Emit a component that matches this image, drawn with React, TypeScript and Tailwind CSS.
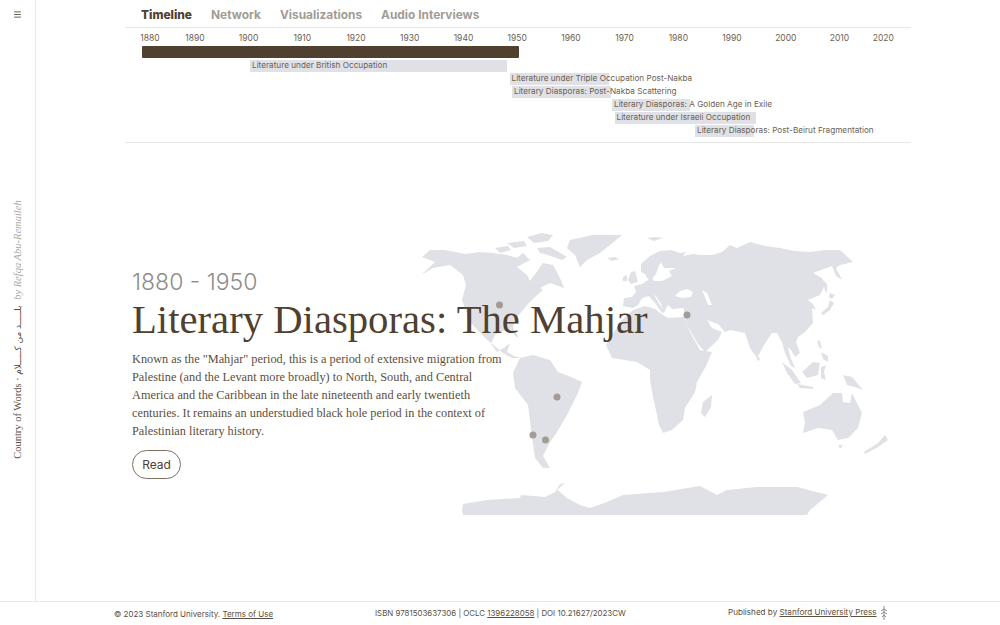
import { Menu } from "lucide-react"

const sans = "font-['Inter','Liberation_Sans',sans-serif]"
const serif = "font-['Liberation_Serif',serif]"

const years = [1890, 1900, 1910, 1920, 1930, 1940, 1950, 1960, 1970, 1980, 1990, 2000, 2010]

// left offset from the timeline edge, bar width, label
const periods = [
  { left: 125, width: 257, label: "Literature under British Occupation" },
  { left: 384.5, width: 99.5, label: "Literature under Triple Occupation Post-Nakba" },
  { left: 387, width: 99, label: "Literary Diasporas: Post-Nakba Scattering" },
  { left: 487, width: 78, label: "Literary Diasporas: A Golden Age in Exile" },
  { left: 489.5, width: 141.5, label: "Literature under Israeli Occupation" },
  { left: 570, width: 59, label: "Literary Diasporas: Post-Beirut Fragmentation" },
]

const land = [
  // north america
  "M422 257 L430 250 L445 250 L465 254 L480 252 L493 253 L507 255 L517 258 L523 253 L530 260 L517 267 L527 275 L530 281 L538 270 L543 263 L553 265 L560 278 L564 288 L550 283 L540 288 L543 290 L535 297 L527 305 L515 320 L513 328 L519 338 L515 336 L511 329 L503 331 L495 335 L491 344 L497 352 L505 347 L510 343 L507 352 L514 356 L521 358 L512 358 L503 353 L485 338 L470 322 L462 300 L466 285 L463 275 L450 265 L433 268 L421 275 L435 262 Z",
  // arctic islands
  "M495 248 L508 246 L511 250 L500 253 Z",
  "M507 243 L524 241 L527 246 L514 248 Z",
  "M527 237 L541 233 L553 235 L548 241 L534 243 Z",
  "M537 248 L550 247 L567 257 L562 260 L548 255 L540 253 Z",
  // greenland
  "M570 240 L593 235 L622 235 L610 245 L600 253 L587 260 L580 267 L575 255 L567 248 Z",
  "M607 258 L615 257 L619 259 L612 261 Z",
  "M647 238 L656 237 L663 238 L654 241 Z",
  // uk + ireland
  "M628 280 L631 272 L635 271 L638 282 L631 284 Z",
  "M623 277 L627 275 L627 281 L623 281 Z",
  // eurasia
  "M633 308 L623 306 L624 298 L632 297 L636 292 L634 286 L642 284 L648 280 L651 276 L654 281 L662 281 L672 276 L669 271 L676 268 L664 268 L661 262 L666 258 L659 265 L656 274 L652 279 L648 279 L645 274 L641 272 L641 264 L650 256 L660 251 L671 250 L680 253 L686 252 L683 256 L693 254 L700 255 L712 255 L722 252 L730 245 L737 248 L750 242 L765 246 L780 248 L795 251 L810 252 L825 250 L840 250 L853 262 L840 265 L836 268 L842 280 L836 276 L832 266 L813 273 L822 278 L825 285 L820 295 L808 300 L813 304 L816 310 L812 308 L813 323 L805 332 L798 337 L796 342 L800 353 L795 357 L791 350 L788 347 L790 356 L795 368 L791 366 L785 353 L782 342 L777 333 L772 333 L764 345 L757 358 L750 348 L745 333 L730 330 L725 332 L718 324 L707 320 L712 328 L722 332 L718 340 L705 352 L698 344 L687 325 L684 316 L684 308 L672 309 L668 305 L664 312 L661 304 L656 296 L654 295 L660 305 L665 312 L662 313 L655 303 L649 296 L642 298 L638 305 Z",
  // africa
  "M633 310 L645 306 L655 309 L660 313 L668 318 L684 317 L690 332 L700 350 L712 352 L706 366 L697 382 L695 392 L685 408 L683 420 L672 430 L663 433 L659 425 L657 415 L653 397 L650 380 L650 370 L637 362 L625 360 L612 358 L606 345 L612 335 L622 320 Z",
  // madagascar
  "M712 395 L711 407 L705 417 L701 413 L703 402 Z",
  // south america
  "M513 373 L520 358 L533 355 L550 360 L558 372 L571 377 L582 382 L578 393 L567 415 L557 432 L549 444 L543 456 L550 468 L543 468 L535 458 L532 437 L528 405 L515 388 Z",
  // sakhalin, japan, sri lanka
  "M823 280 L827 284 L827 293 L825 291 Z",
  "M830 293 L835 295 L832 299 L829 297 Z",
  "M830 300 L834 303 L830 310 L823 315 L821 313 L828 307 Z",
  "M757 356 L760 358 L759 361 L757 360 Z",
  // philippines, borneo, sumatra, java, new guinea
  "M817 340 L820 341 L822 349 L819 347 Z",
  "M821 352 L828 356 L828 362 L823 359 Z",
  "M802 372 L813 362 L820 363 L818 375 L807 378 Z",
  "M782 362 L792 370 L801 383 L795 384 L787 373 Z",
  "M797 384 L813 387 L813 389 L800 388 Z",
  "M821 367 L826 365 L824 372 L826 380 L821 378 Z",
  "M843 375 L852 377 L863 390 L855 387 L847 385 Z",
  // australia, tasmania, new zealand
  "M803 412 L820 405 L833 393 L842 393 L843 402 L850 403 L852 393 L862 413 L858 428 L848 438 L838 440 L832 430 L818 428 L803 433 L805 423 Z",
  "M838 445 L843 445 L840 449 Z",
  "M885 435 L888 440 L878 447 L865 454 L864 452 L878 443 Z",
  // antarctica
  "M463 504 L487 500 L520 498 L521 495 L545 497 L555 492 L560 484 L565 483 L557 490 L560 492 L567 498 L580 505 L590 508 L607 502 L623 495 L663 492 L700 486 L717 495 L727 490 L757 487 L797 487 L828 495 L810 510 L807 515 L463 515 L462 510 Z",
]

// inland water, cut out of the land above
const seas = [
  "M675 296 L680 291 L687 289 L693 292 L691 297 L682 298 Z",
  "M702 290 L707 293 L712 305 L708 305 L705 297 Z",
]

const dots = [
  [499.5, 305],
  [687, 315],
  [557, 397],
  [533, 435],
  [545.5, 440],
]

function WorldMap() {
  return (
    <svg className="absolute left-[379px] top-[230px] h-[290px] w-[495px]" viewBox="415 230 495 290">
      {land.map((d, i) => (
        <path key={i} d={d} fill="#dfe1e6" />
      ))}
      {seas.map((d, i) => (
        <path key={i} d={d} fill="#ffffff" />
      ))}
      {dots.map(([cx, cy], i) => (
        <circle key={i} cx={cx} cy={cy} r="3.5" fill="#a29c95" />
      ))}
    </svg>
  )
}

export default function App() {
  return (
    <div className={`flex h-[625px] w-[1000px] flex-col overflow-hidden bg-white text-[#4f4030] ${sans}`}>
      <div className="flex min-h-0 flex-1">
        <aside className="relative flex w-[36px] shrink-0 flex-col items-center border-r border-[#e8e8e8] pt-[58px]">
          <Menu className="absolute left-[13px] top-[10px] h-[9px] w-[9px] text-[#4f4030]" strokeWidth={2.2} />
          <div className="mt-[142px] flex rotate-180 items-center gap-[6px] whitespace-nowrap [writing-mode:vertical-rl]">
            <span className={`text-[10.5px] text-[#5c4f40] ${serif}`}>
              Country of Words ·{" "}
              <span className="font-['DejaVu_Sans',sans-serif] text-[9px]">بلـــــد من كـــــلام</span>
            </span>
            <span className={`text-[10.5px] italic text-[#a9a9a9] ${serif}`}>by Refqa Abu-Remaileh</span>
          </div>
        </aside>

        <main className="relative flex-1">
          <div className="ml-[89px] w-[786px]">
            <nav className="flex h-[28px] items-center gap-[19px] border-b border-[#e8e8e8] pl-[16px] pt-[2px] text-[11.9px] font-bold text-[#a29c95]">
              <span className="font-extrabold text-[#4f4030]">Timeline</span>
              <span>Network</span>
              <span>Visualizations</span>
              <span>Audio Interviews</span>
            </nav>

            <div className="h-[115px] border-b border-[#e8e8e8]">
              <div className="ml-[7px] flex pt-[4px] text-center text-[8.5px] leading-[13px] text-[#6b5f52]">
                <span className="w-[36px]">1880</span>
                {years.map((y) => (
                  <span key={y} className="w-[53.73px]">{y}</span>
                ))}
                <span className="w-[34px]">2020</span>
              </div>
              <div className="ml-[17px] mt-[1px] h-[12px] w-[377px] rounded-[1px] bg-[#4f4030]" />
              <div className="mt-[2px] flex flex-col gap-[1.5px] text-[8.2px] leading-[11.5px] text-[#6b5f52]">
                {periods.map((p) => (
                  <div key={p.label} className="relative h-[11.5px] bg-[#dfe1e6]" style={{ marginLeft: p.left, width: p.width }}>
                    <span className="absolute left-[2px] top-0 whitespace-nowrap">{p.label}</span>
                  </div>
                ))}
              </div>
            </div>
          </div>

          <WorldMap />

          <section className="relative ml-[96px] mt-[125px] w-[375px]">
            <div className="text-[23px] font-light leading-[28px] text-[#8f8d8a]">1880 - 1950</div>
            <h1 className={`-mt-[1px] whitespace-nowrap text-[40.7px] leading-[50px] text-[#4f4030] ${serif}`}>
              Literary Diasporas: The Mahjar
            </h1>
            <p className={`mt-[5px] text-[12.3px] leading-[18px] text-[#5c4f40] ${serif}`}>
              Known as the "Mahjar" period, this is a period of extensive migration from Palestine (and the Levant more
              broadly) to North, South, and Central America and the Caribbean in the late nineteenth and early twentieth
              centuries. It remains an understudied black hole period in the context of Palestinian literary history.
            </p>
            <button className="mt-[10px] flex h-[29px] w-[49px] items-center justify-center rounded-full border border-[#7d7063] text-[12px] text-[#4f4030]">
              Read
            </button>
          </section>
        </main>
      </div>

      <footer className="relative flex h-[24px] shrink-0 items-center border-t border-[#e8e8e8] text-[8px] text-[#5c4f40]">
        <div className="ml-[114px] w-[261px] pt-[1px]">
          © 2023 Stanford University. <span className="underline">Terms of Use</span>
        </div>
        <div className="w-[353px] pt-[1px] text-[7.9px]">
          ISBN 9781503637306 | OCLC <span className="underline">1396228058</span> | DOI 10.21627/2023CW
        </div>
        <div className="flex items-center gap-[3px]">
          <span className="-mt-[3px] text-[8.1px]">
            Published by <span className="underline">Stanford University Press</span>
          </span>
          <svg width="8" height="14" viewBox="0 0 8 14" className="-mt-[1px] text-[#8f8d8a]">
            <path d="M4 0 V14 M1 5 L4 3 L7 5 M1 8 L4 6 L7 8 M2 11 L4 9 L6 11" stroke="currentColor" fill="none" strokeWidth="1" />
          </svg>
        </div>
      </footer>
    </div>
  )
}
